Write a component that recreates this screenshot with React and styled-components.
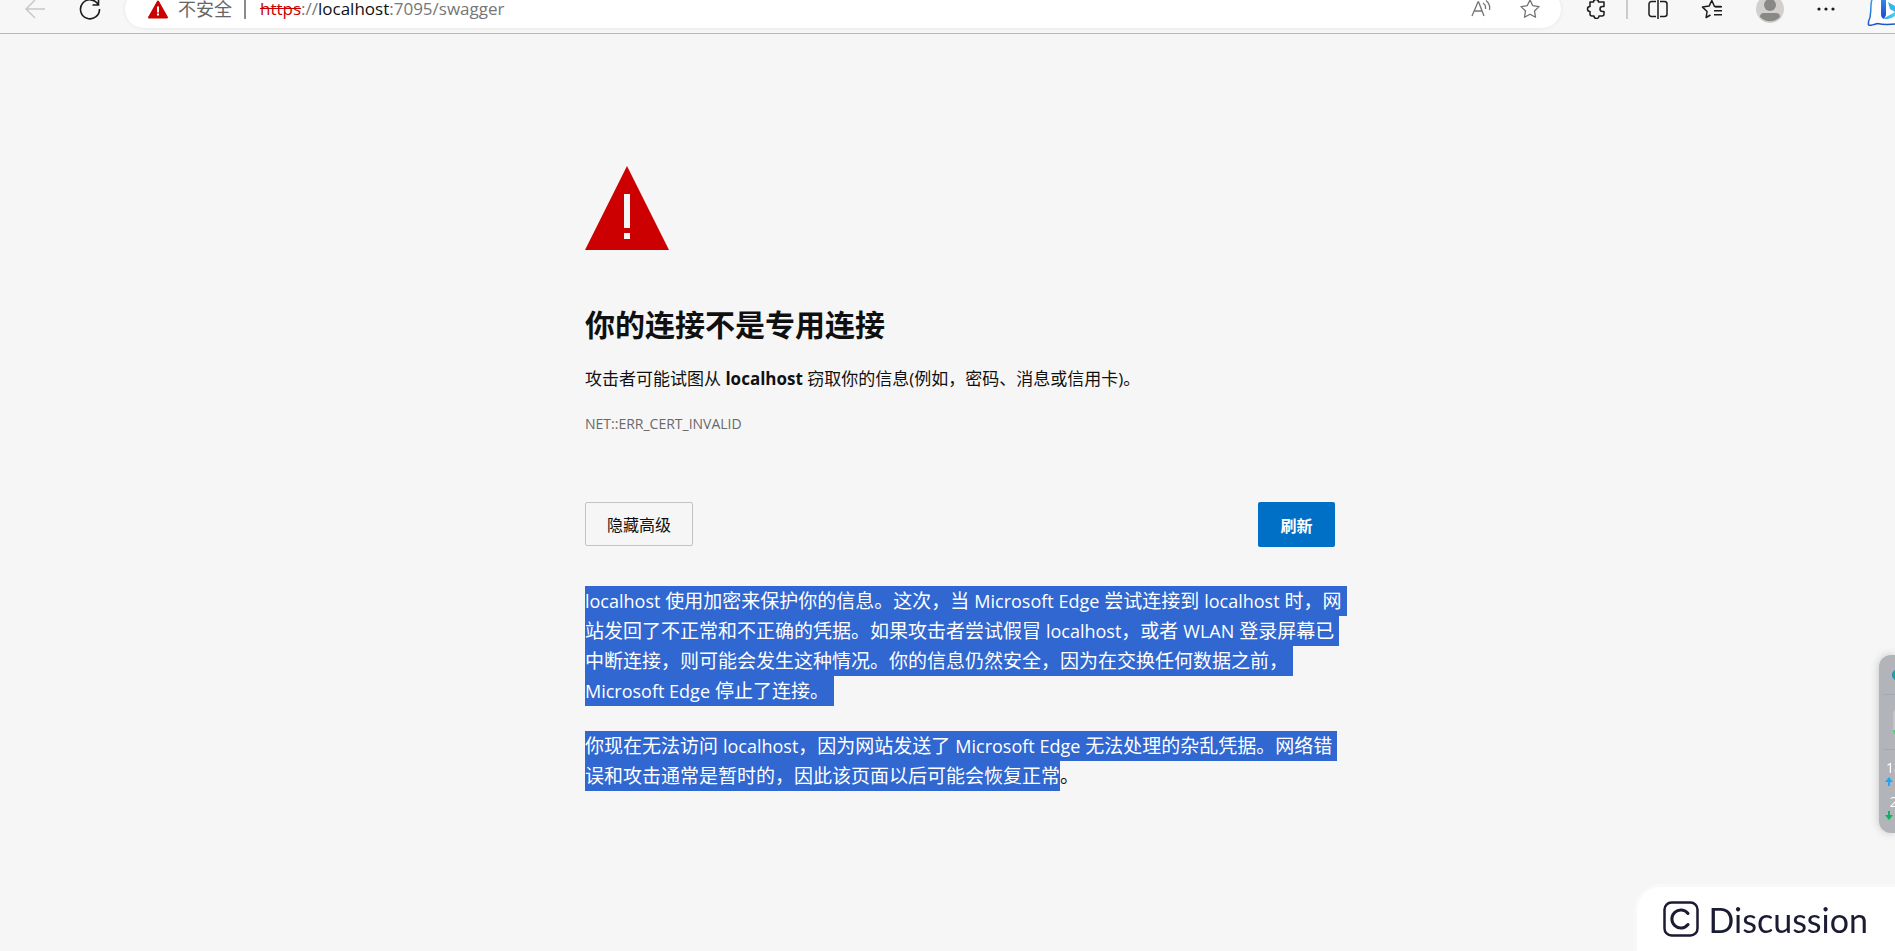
import styled, { createGlobalStyle } from "styled-components";

const firstParagraph = [
  "localhost 使用加密来保护你的信息。这次，当 Microsoft Edge 尝试连接到 localhost 时，网",
  "站发回了不正常和不正确的凭据。如果攻击者尝试假冒 localhost，或者 WLAN 登录屏幕已",
  "中断连接，则可能会发生这种情况。你的信息仍然安全，因为在交换任何数据之前，",
  "Microsoft Edge 停止了连接。",
];

export default function App() {
  return (
    <>
      <GlobalStyle />
      <Toolbar>
        <ToolbarRow>
          <NavButtons>
            <IconButton aria-label="后退" disabled>
              <BackIcon />
            </IconButton>
            <IconButton aria-label="刷新页面">
              <ReloadIcon />
            </IconButton>
          </NavButtons>
          <AddressBar>
            <SmallWarningIcon />
            <NotSecure>不安全</NotSecure>
            <Separator $color="#8a8a8a" />
            <Url href="#">
              <Scheme>https</Scheme>://<Host>localhost</Host>:7095/swagger
            </Url>
            <BarIcons>
              <IconButton aria-label="大声朗读">
                <ReadAloudIcon />
              </IconButton>
              <IconButton aria-label="收藏">
                <StarIcon />
              </IconButton>
            </BarIcons>
          </AddressBar>
          <Tools>
            <IconButton aria-label="扩展">
              <PuzzleIcon />
            </IconButton>
            <Separator $color="#cccccc" />
            <IconButton aria-label="分屏">
              <SplitIcon />
            </IconButton>
            <IconButton aria-label="收藏夹">
              <FavoritesIcon />
            </IconButton>
            <IconButton aria-label="个人资料">
              <AvatarIcon />
            </IconButton>
            <IconButton aria-label="设置及其他">
              <DotsIcon />
            </IconButton>
          </Tools>
          <BingButton aria-label="Bing">
            <BingIcon />
          </BingButton>
        </ToolbarRow>
      </Toolbar>

      <Main>
        <Content>
          <WarningIcon />
          <Title>你的连接不是专用连接</Title>
          <Summary>
            攻击者可能试图从 <strong>localhost</strong>{" "}
            窃取你的信息(例如，密码、消息或信用卡)。
          </Summary>
          <ErrorCode>NET::ERR_CERT_INVALID</ErrorCode>
          <Buttons>
            <OutlineButton>隐藏高级</OutlineButton>
            <PrimaryButton>刷新</PrimaryButton>
          </Buttons>
          <Paragraph>
            {firstParagraph.map((line) => (
              <Line key={line}>
                <Selected $tail>{mixed(line)}</Selected>
              </Line>
            ))}
          </Paragraph>
          <Paragraph>
            <Line>
              <Selected $tail>
                {mixed(
                  "你现在无法访问 localhost，因为网站发送了 Microsoft Edge 无法处理的杂乱凭据。网络错"
                )}
              </Selected>
            </Line>
            <Line>
              <Selected>误和攻击通常是暂时的，因此该页面以后可能会恢复正常</Selected>。
            </Line>
          </Paragraph>
        </Content>
      </Main>

      <Monitor>
        <MonitorPart $height="40px">
          <Dot />
        </MonitorPart>
        <MonitorPart $height="55px">
          <Gauge />
        </MonitorPart>
        <Speed>
          <span>18</span>
          <ArrowIcon color="#18a8ff" />
        </Speed>
        <Speed>
          <span>&nbsp;2</span>
          <ArrowIcon color="#07b75b" down />
        </Speed>
      </Monitor>

      <Discussion href="#">
        <DiscussionIcon />
        Discussion
      </Discussion>
    </>
  );
}

// latin words look too big next to the chinese ones, so they get their own size
function mixed(text) {
  return text
    .split(/([A-Za-z]+(?: [A-Za-z]+)*)/)
    .map((part, i) => (i % 2 ? <Latin key={i}>{part}</Latin> : part));
}

function BackIcon() {
  return (
    <svg width="20" height="20" fill="none" stroke="#c8c8c8" strokeWidth="1.5">
      <path d="M20 10H1M10 1L1 10l9 9" />
    </svg>
  );
}

function ReloadIcon() {
  return (
    <svg width="22" height="22" fill="none" stroke="#1b1b1b" strokeWidth="1.6">
      <path d="M19.2 6.5A9.5 9.5 0 1 0 20.5 11M19.5 1v6h-6" />
    </svg>
  );
}

function SmallWarningIcon() {
  return (
    <svg width="20" height="19" viewBox="0 0 20 19">
      <path d="M10 1.5L19 17.5H1z" fill="#c00" stroke="#c00" strokeWidth="2" strokeLinejoin="round" />
      <path d="M9 6.5h2v6H9zM9 13.5h2v2H9z" fill="#fff" />
    </svg>
  );
}

function ReadAloudIcon() {
  return (
    <svg width="20" height="20" fill="none" stroke="#767676" strokeWidth="1.3">
      <path d="M1 17L7 3h.6L13 17M3 12h8" />
      <path d="M12 4a6 6 0 0 1 2.5 6M15 1.5A10 10 0 0 1 18.500 11" />
    </svg>
  );
}

const starPath =
  "M10 1l2.800 5.700 6.200.9-4.500 4.400 1 6.200-5.500-2.900-5.500 2.900 1-6.200L1 7.600l6.200-.9z";

function StarIcon() {
  return (
    <svg width="20" height="20" fill="none" stroke="#707070" strokeWidth="1.3" strokeLinejoin="round">
      <path d={starPath} />
    </svg>
  );
}

function PuzzleIcon() {
  return (
    <svg width="20" height="20" fill="none" stroke="#1b1b1b" strokeWidth="1.5" strokeLinejoin="round">
      <path d="M4 3h3.500a2.500 2.500 0 0 1 5 0H18v4.500h-1.500a2.500 2.500 0 0 0 0 5H18V15a2 2 0 0 1-2 2h-3a2.500 2.500 0 0 1-5 0H6a2 2 0 0 1-2-2v-2.500a2.500 2.500 0 0 1 0-5z" />
    </svg>
  );
}

function SplitIcon() {
  return (
    <svg width="20" height="20" fill="none" stroke="#1b1b1b" strokeWidth="1.5">
      <path d="M8 2.500H3.500a2.500 2.500 0 0 0-2.500 2.500v10a2.500 2.500 0 0 0 2.500 2.500H8M12 2.500h4.500A2.500 2.500 0 0 1 19 5v10a2.500 2.500 0 0 1-2.500 2.500H12M10 0v20" />
    </svg>
  );
}

function FavoritesIcon() {
  return (
    <svg width="22" height="20" fill="none" stroke="#1b1b1b" strokeWidth="1.5" strokeLinejoin="round">
      <path d="M20 7.500h-6.500l-2.700-6-2.700 5.600-6.600 1 4.600 4.400-1 6L9.500 16" />
      <path d="M14 7.700h7M13 11.700h8M13 15.700h8" />
    </svg>
  );
}

function AvatarIcon() {
  return (
    <svg width="28" height="28" viewBox="0 0 28 28">
      <circle cx="14" cy="14" r="14" fill="#d2d0ce" />
      <circle cx="14" cy="10" r="6" fill="#8a8886" />
      <path d="M4 22q0-4 4-4h12q4 0 4 4a14 14 0 0 1-20 0z" fill="#8a8886" />
    </svg>
  );
}

function DotsIcon() {
  return (
    <svg width="18" height="4" fill="#1b1b1b">
      <circle cx="2" cy="2" r="1.600" />
      <circle cx="9" cy="2" r="1.600" />
      <circle cx="16" cy="2" r="1.600" />
    </svg>
  );
}

function BingIcon() {
  return (
    <svg width="28" height="40" viewBox="0 0 28 40">
      <defs>
        <linearGradient id="bing" x1="0" y1="0" x2="1" y2="0">
          <stop offset="0" stopColor="#35a5f2" />
          <stop offset="1" stopColor="#45d5f2" />
        </linearGradient>
        <linearGradient id="stem" x1="0" y1="0" x2="0" y2="1">
          <stop offset="0" stopColor="#3aa0f5" />
          <stop offset="1" stopColor="#1746d0" />
        </linearGradient>
        <linearGradient id="bubble" x1="0" y1="0" x2="0" y2="1">
          <stop offset="0" stopColor="#39b8f0" />
          <stop offset="1" stopColor="#1c55c8" />
        </linearGradient>
      </defs>
      <path
        d="M28 2H17A14 14 0 0 0 4 16q0 6-1 12.500-2 4-1.500 7.500 1 1 9-1.500 7 1.500 17.500.5"
        fill="#fff"
        stroke="url(#bubble)"
        strokeWidth="1.5"
      />
      <path d="M14 4l5 2v20l-2 4q-3-1-3-5z" fill="url(#stem)" />
      <path d="M16 29q2 0 5-2l7-4v4q-7 5-12 2z" fill="url(#bing)" />
      <path d="M21 13l7 4v6l-5-3z" fill="#35b5f2" />
    </svg>
  );
}

function WarningIcon() {
  return (
    <svg width="84" height="84" viewBox="0 0 84 84">
      <path d="M42 0L84 84H0z" fill="#c00" />
      <path d="M39 28h6v34h-6zM39 67h6v6h-6z" fill="#f6f6f6" />
    </svg>
  );
}

function ArrowIcon({ color, down }) {
  return (
    <svg width="8" height="9" fill={color}>
      <path d={down ? "M3 0h2v4h3L4 9 0 4h3z" : "M3 9h2V5h3L4 0 0 5h3z"} />
    </svg>
  );
}

function DiscussionIcon() {
  return (
    <svg width="36" height="36" fill="none" stroke="#1b1b33" strokeLinecap="round">
      <rect x="1.500" y="1.500" width="33" height="33" rx="7" strokeWidth="2.500" />
      <path d="M25 12.500A9 9 0 1 0 25 23.500" strokeWidth="3" />
    </svg>
  );
}

const GlobalStyle = createGlobalStyle`
  * {
    box-sizing: border-box;
  }
  body {
    margin: 0;
    background-color: #f6f6f6;
    color: #101010;
    font-family: "Open Sans", "Noto Sans CJK SC", sans-serif;
    overflow-x: hidden;
  }
  h1, p {
    margin: 0;
  }
  button {
    font-family: inherit;
  }
  svg {
    display: block;
    flex: none;
  }
`;

/* the row is taller than the bar, so its top is cut off */
const Toolbar = styled.header`
  display: flex;
  align-items: flex-end;
  height: 34px;
  overflow: hidden;
  background-color: #f7f7f7;
  border-bottom: 1px solid #b9b9b9;
`;

const ToolbarRow = styled.div`
  display: flex;
  align-items: center;
  flex: 1;
  height: 48px;
`;

const NavButtons = styled.div`
  display: flex;
  gap: 34px;
  padding: 0 24px 0 25px;
`;

const IconButton = styled.button`
  display: flex;
  align-items: center;
  justify-content: center;
  padding: 0;
  border: 0;
  background: none;
`;

const AddressBar = styled.div`
  display: flex;
  align-items: center;
  flex: 1;
  height: 38px;
  padding: 0 21px 0 23px;
  border-radius: 20px;
  background-color: #fff;
  box-shadow: 0 0 4px rgba(0, 0, 0, 0.08);
  font-size: 17px;
  line-height: 18px;
`;

const NotSecure = styled.span`
  margin: 0 12px 0 10px;
  color: #666;
  font-size: 18px;
`;

const Separator = styled.span`
  width: 2px;
  height: 20px;
  background-color: ${(props) => props.$color};
`;

const Url = styled.a`
  margin-left: 14px;
  color: #767676;
  text-decoration: none;
`;

const Scheme = styled.span`
  color: #c00;
  text-decoration: line-through;
`;

const Host = styled.span`
  color: #101010;
`;

const BarIcons = styled.div`
  display: flex;
  gap: 29px;
  margin-left: auto;
`;

const Tools = styled.div`
  display: flex;
  align-items: center;
  gap: 33px;
  padding: 0 32px 0 25px;

  ${Separator} {
    margin: 0 -13px;
  }
`;

const BingButton = styled(IconButton)`
  align-self: flex-start;
  margin-top: 4px;
`;

const Main = styled.main`
  display: flex;
  justify-content: center;
  padding: 132px 0 160px 25px;
`;

const Content = styled.div`
  width: 750px;
`;

const Title = styled.h1`
  margin-top: 55px;
  font-size: 30px;
  line-height: 40px;
`;

const Summary = styled.p`
  margin-top: 20px;
  font-size: 17px;
  line-height: 28px;
`;

const ErrorCode = styled.p`
  margin-top: 21px;
  color: #696969;
  font-size: 14px;
  line-height: 20px;
`;

const Buttons = styled.div`
  display: flex;
  justify-content: space-between;
  align-items: flex-start;
  margin: 68px 0 39px;
`;

const OutlineButton = styled.button`
  width: 108px;
  height: 44px;
  border: 1px solid #c2c2c2;
  border-radius: 2px;
  background-color: transparent;
  color: #101010;
  font-size: 16px;
`;

const PrimaryButton = styled.button`
  width: 77px;
  height: 45px;
  border: 0;
  border-radius: 2px;
  background-color: #0070c6;
  color: #fff;
  font-size: 16px;
  font-weight: 700;
`;

const Paragraph = styled.p`
  font-size: 19px;
  line-height: 30px;
  white-space: nowrap;

  & + & {
    margin-top: 25px;
  }
`;

const Line = styled.span`
  display: flex;
  height: 30px;
`;

const Latin = styled.span`
  font-size: 18px;
`;

const Selected = styled.span`
  padding-right: ${(props) => (props.$tail ? "5px" : "0")};
  background-color: #3067d1;
  color: #fff;
`;

const Monitor = styled.aside`
  position: fixed;
  top: 655px;
  right: 0;
  width: 16px;
  height: 178px;
  overflow: hidden;
  border-radius: 12px 0 0 12px;
  background-color: #b2b4b9;
  box-shadow: 0 0 10px rgba(0, 0, 0, 0.2);
  color: #fff;
  font-size: 14px;
  line-height: 18px;
`;

const MonitorPart = styled.div`
  display: flex;
  align-items: center;
  height: ${(props) => props.$height};
  margin-left: 4px;
  border-bottom: 1px solid #a3abb0;
`;

const Dot = styled.span`
  flex: none;
  width: 12px;
  height: 12px;
  margin-left: 9px;
  border: 1px solid #2f7fd0;
  border-radius: 50%;
  background-color: #07b77b;
`;

const Gauge = styled.span`
  flex: none;
  width: 34px;
  height: 34px;
  margin-left: 10px;
  border-radius: 10px;
  background: linear-gradient(#c3c5c9 75%, #4fd07a 75%);
`;

const Speed = styled.div`
  padding: 9px 0 0 6px;
  height: 34px;

  span {
    display: block;
    margin-left: 1px;
  }
`;

const Discussion = styled.a`
  position: fixed;
  right: 0;
  bottom: 0;
  display: flex;
  align-items: center;
  gap: 10px;
  height: 64px;
  padding: 0 27px 0 26px;
  border-radius: 24px 0 0 0;
  background-color: #fff;
  box-shadow: 0 0 0 3px rgba(255, 255, 255, 0.3);
  color: #1b1b33;
  font-family: Lato, sans-serif;
  font-size: 34px;
  text-decoration: none;
`;
